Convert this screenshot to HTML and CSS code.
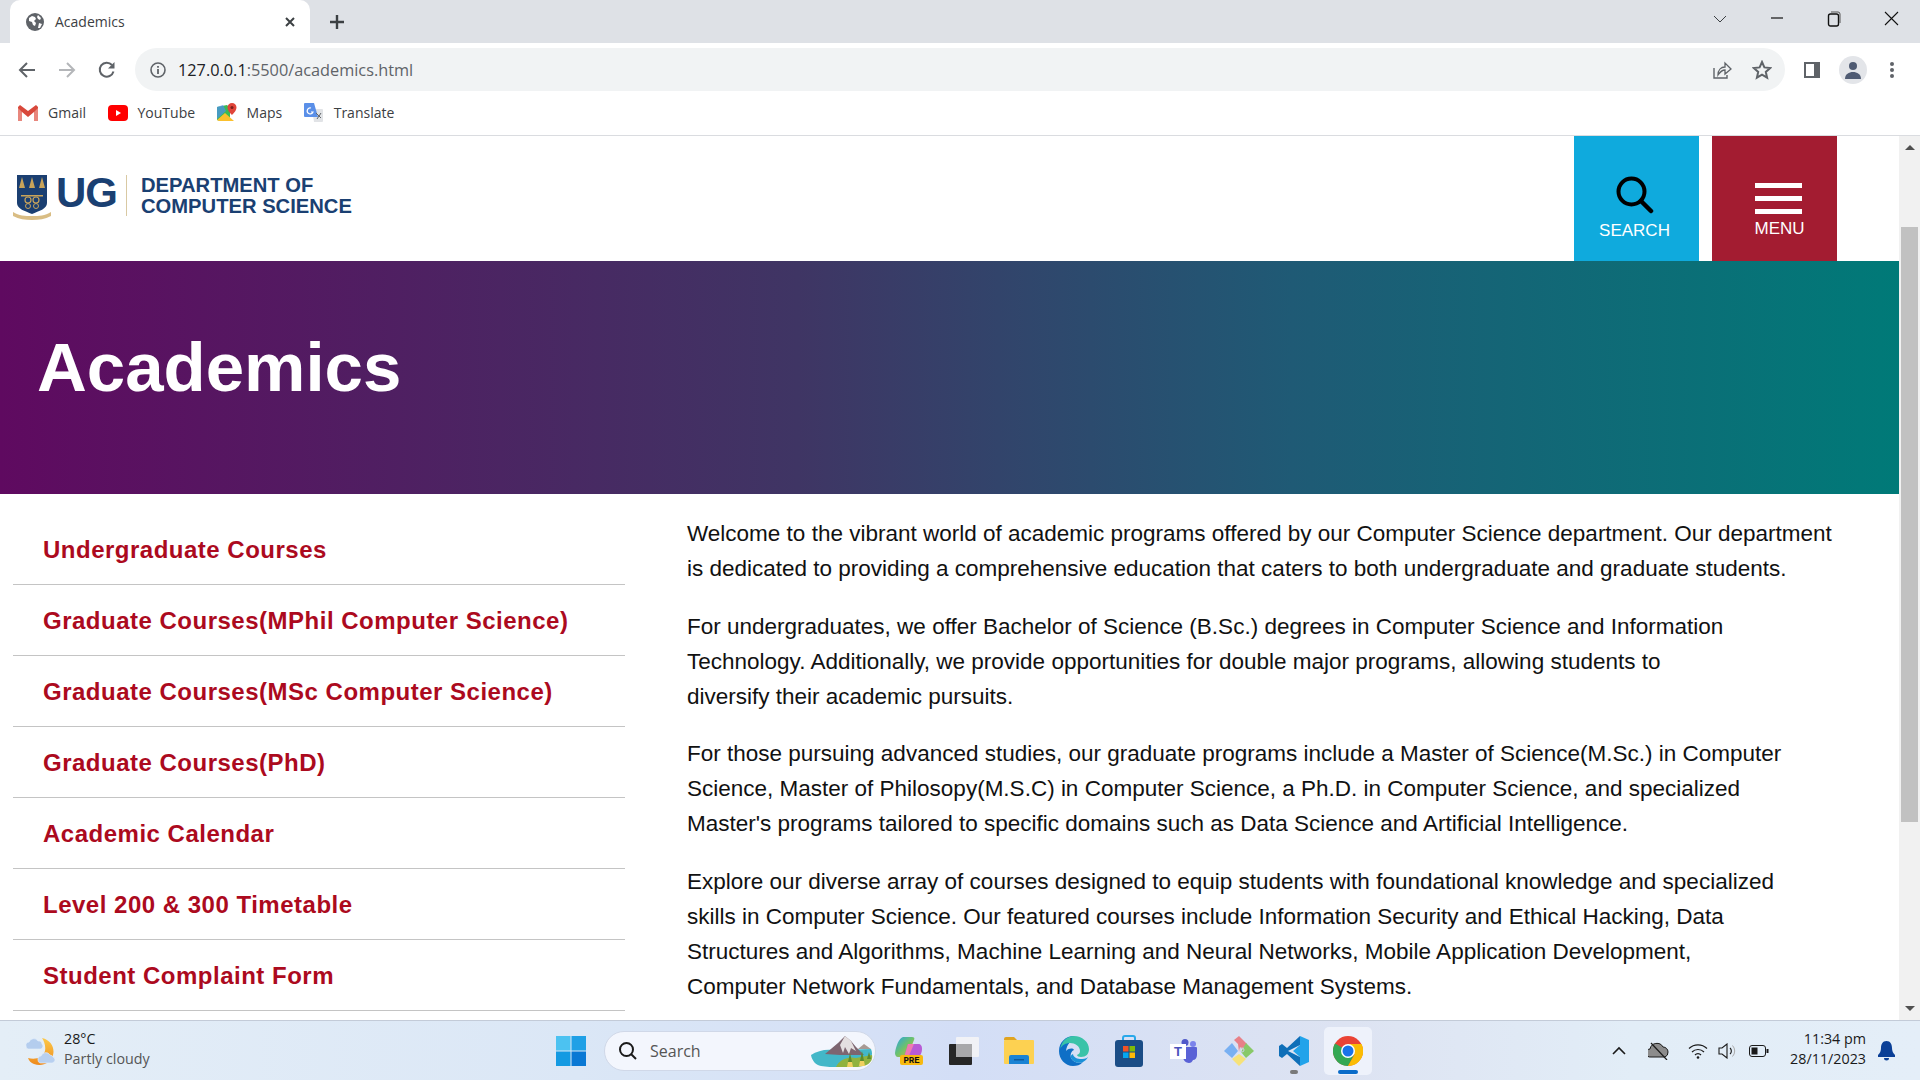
FILE: index.html
```html
<!DOCTYPE html>
<html lang="en">
<head>
  <meta charset="UTF-8" />
  <title>Academics</title>
  <link rel="stylesheet" href="styles.css">
</head>
<body>
<div class="screen">

  <!-- browser chrome -->
  <div class="tabstrip">
    <div class="tab">
      <svg class="tab-globe" width="18" height="18" viewBox="0 0 18 18"><circle cx="9" cy="9" r="9" fill="#5f6368"/><path d="M3 5l3-2 3 1 1 2-2 2 2 2-1 3-2-1-1-3-3-1zM12 2l3 3-1 2-2-1-1-2zM13 10l3 1-2 4-2 0z" fill="#fff"/></svg>
      <span class="tab-title">Academics</span>
      <svg class="tab-close" width="12" height="12" viewBox="0 0 12 12"><path d="M2 2l8 8M10 2l-8 8" stroke="#3c4043" stroke-width="2"/></svg>
    </div>
    <svg class="newtab" width="16" height="16" viewBox="0 0 16 16"><path d="M8 1v14M1 8h14" stroke="#3c4043" stroke-width="2.4"/></svg>
    <div class="win-controls">
      <svg class="win-chevron" width="14" height="10" viewBox="0 0 14 10"><path d="M1 2l6 6 6-6" fill="none" stroke="#3c4043"/></svg>
      <svg width="14" height="14" viewBox="0 0 14 14"><path d="M1 7h12" stroke="#111" stroke-width="1.2"/></svg>
      <svg width="14" height="16" viewBox="0 0 14 16"><rect x="1.5" y="3" width="10" height="12" rx="2" fill="none" stroke="#111" stroke-width="1.4"/><path d="M4 1h7a2 2 0 0 1 2 2v9" fill="none" stroke="#555"/></svg>
      <svg width="15" height="15" viewBox="0 0 15 15"><path d="M1 1l13 13M14 1L1 14" stroke="#111" stroke-width="1.1"/></svg>
    </div>
  </div>

  <div class="toolbar">
    <div class="nav-btns">
      <svg width="18" height="18" viewBox="0 0 18 18"><path d="M17 9H3M9 2L2 9l7 7" fill="none" stroke="#5f6368" stroke-width="2"/></svg>
      <svg width="18" height="18" viewBox="0 0 18 18"><path d="M1 9h14M9 2l7 7-7 7" fill="none" stroke="#b4b6b9" stroke-width="2"/></svg>
      <svg width="18" height="18" viewBox="0 0 18 18"><path d="M15.5 10.5A7 7 0 1 1 14 4" fill="none" stroke="#5f6368" stroke-width="2"/><path d="M16.5 1v6.5H10z" fill="#5f6368"/></svg>
    </div>
    <div class="omnibox">
      <svg width="16" height="16" viewBox="0 0 16 16"><circle cx="8" cy="8" r="7" fill="none" stroke="#5f6368" stroke-width="1.6"/><path d="M8 7v5M8 4v1.8" stroke="#5f6368" stroke-width="1.8"/></svg>
      <span class="url"><b>127.0.0.1</b>:5500/academics.html</span>
      <svg class="omni-share" width="20" height="20" viewBox="0 0 20 20"><path d="M2 8v10h13v-3" fill="none" stroke="#5f6368" stroke-width="1.4"/><path d="M6 15c0-5 3-8 7-8V3l6 6-6 5v-4c-3 0-5 2-7 5z" fill="none" stroke="#5f6368" stroke-width="1.3"/></svg>
      <svg class="omni-star" width="20" height="20" viewBox="0 0 20 20"><path d="M10 2l2.4 5.4 5.8.6-4.4 3.9 1.3 5.8L10 14.7l-5.1 3 1.3-5.8L1.8 8l5.8-.6z" fill="none" stroke="#5f6368" stroke-width="2"/></svg>
    </div>
    <div class="tool-btns">
      <svg width="18" height="18" viewBox="0 0 18 18"><rect x="1" y="1" width="16" height="16" fill="#5f6368"/><rect x="3" y="3" width="8" height="12" fill="#fff"/></svg>
      <span class="profile"><svg width="18" height="18" viewBox="0 0 18 18"><circle cx="9" cy="5" r="4" fill="#4f5b73"/><path d="M1 18c0-5 4-7 8-7s8 2 8 7z" fill="#4f5b73"/></svg></span>
      <svg class="dots" width="6" height="18" viewBox="0 0 6 18"><circle cx="3" cy="3" r="2" fill="#5f6368"/><circle cx="3" cy="9" r="2" fill="#5f6368"/><circle cx="3" cy="15" r="2" fill="#5f6368"/></svg>
    </div>
  </div>

  <div class="bookmarks">
    <a class="bm">
      <svg width="20" height="16" viewBox="0 0 20 16"><path d="M0 2v14h4V7l6 5 6-5v9h4V2l-2-2-8 6-8-6z" fill="#d8483b"/><path d="M0 16h4V7L0 3zM16 16h4V3l-4 4z" fill="#e8877d"/></svg>
      Gmail
    </a>
    <a class="bm">
      <svg width="20" height="16" viewBox="0 0 20 16"><rect width="20" height="16" rx="4" fill="#f00"/><path d="M8 5l5 3-5 3z" fill="#fff"/></svg>
      YouTube
    </a>
    <a class="bm">
      <svg width="20" height="20" viewBox="0 0 20 20"><path d="M0 4l10-2 3 3v13H3L0 17z" fill="#3cba54"/><path d="M0 17l8-7 9 8H2z" fill="#fbc02d"/><path d="M0 4l6-2 3 6-9 8z" fill="#4d8ef0" opacity=".7"/><path d="M15 0a4.5 4.5 0 0 1 4.5 4.5C19.5 8 15 12 15 12s-4.5-4-4.5-7.5A4.5 4.5 0 0 1 15 0z" fill="#e0453a"/><circle cx="15" cy="4.5" r="1.5" fill="#7b1f1a"/></svg>
      Maps
    </a>
    <a class="bm">
      <svg width="20" height="20" viewBox="0 0 20 20"><path d="M8 6h10a1 1 0 0 1 1 1v11a1 1 0 0 1-1 1H10z" fill="#e1e3e6"/><path d="M1 0h9l4 14H1a1 1 0 0 1-1-1V1a1 1 0 0 1 1-1z" fill="#5a8fe8"/><path d="M7 5a3 3 0 1 0 2 4H7" fill="none" stroke="#fff" stroke-width="1.2"/><path d="M12 10l5 5M17 10l-4 6" stroke="#5f6368" stroke-width="1"/></svg>
      Translate
    </a>
  </div>

  <!-- page -->
  <div class="viewport">
    <div class="page">
      <header class="site-header">
        <a class="logo">
          <svg class="crest" width="38" height="45" viewBox="0 0 38 45">
            <path d="M4 0h30v28c0 6-8 8-15 11C12 36 4 34 4 28z" fill="#1b3f71"/>
            <path d="M9 2l3 11H6zM19 2l3 11h-6zM29 2l3 11h-6z" fill="#c9a45a"/>
            <rect x="8" y="20" width="22" height="1.5" fill="#c9a45a"/>
            <circle cx="15" cy="25" r="3" fill="none" stroke="#c9a45a" stroke-width="1.2"/>
            <circle cx="23" cy="25" r="3" fill="none" stroke="#c9a45a" stroke-width="1.2"/>
            <circle cx="15" cy="31" r="2.5" fill="none" stroke="#c9a45a"/>
            <circle cx="23" cy="31" r="2.5" fill="none" stroke="#c9a45a"/>
            <path d="M0 37c6 4 12 4 19 4s13 0 19-4v4c-6 3-12 4-19 4S6 44 0 41z" fill="#d9bd84"/>
          </svg>
          <span class="logo-ug">UG</span>
          <span class="logo-sep"></span>
          <span class="logo-dept">DEPARTMENT OF<br>COMPUTER SCIENCE</span>
        </a>
        <div class="header-btns">
          <button class="hbtn hbtn-search">
            <svg width="38" height="38" viewBox="0 0 38 38"><circle cx="15.5" cy="15.5" r="13" fill="none" stroke="#000" stroke-width="4"/><path d="M25 25l10 10" stroke="#000" stroke-width="4.5" stroke-linecap="round"/></svg>
            <span>SEARCH</span>
          </button>
          <button class="hbtn hbtn-menu">
            <span class="burger"><i></i><i></i><i></i></span>
            <span>MENU</span>
          </button>
        </div>
      </header>

      <section class="hero">
        <h1>Academics</h1>
      </section>

      <div class="content">
        <ul class="side-nav">
          <li><a>Undergraduate Courses</a></li>
          <li><a>Graduate Courses(MPhil Computer Science)</a></li>
          <li><a>Graduate Courses(MSc Computer Science)</a></li>
          <li><a>Graduate Courses(PhD)</a></li>
          <li><a>Academic Calendar</a></li>
          <li><a>Level 200 &amp; 300 Timetable</a></li>
          <li><a>Student Complaint Form</a></li>
        </ul>
        <div class="intro">
          <p>Welcome to the vibrant world of academic programs offered by our Computer Science department. Our department<br>is dedicated to providing a comprehensive education that caters to both undergraduate and graduate students.</p>
          <p>For undergraduates, we offer Bachelor of Science (B.Sc.) degrees in Computer Science and Information<br>Technology. Additionally, we provide opportunities for double major programs, allowing students to<br>diversify their academic pursuits.</p>
          <p>For those pursuing advanced studies, our graduate programs include a Master of Science(M.Sc.) in Computer<br>Science, Master of Philosopy(M.S.C) in Computer Science, a Ph.D. in Computer Science, and specialized<br>Master's programs tailored to specific domains such as Data Science and Artificial Intelligence.</p>
          <p>Explore our diverse array of courses designed to equip students with foundational knowledge and specialized<br>skills in Computer Science. Our featured courses include Information Security and Ethical Hacking, Data<br>Structures and Algorithms, Machine Learning and Neural Networks, Mobile Application Development,<br>Computer Network Fundamentals, and Database Management Systems.</p>
        </div>
      </div>
    </div>

    <div class="scrollbar">
      <span class="sb-up"></span>
      <span class="sb-thumb"></span>
      <span class="sb-down"></span>
    </div>
  </div>

  <!-- windows taskbar -->
  <footer class="taskbar">
    <div class="weather">
      <svg width="30" height="30" viewBox="0 0 30 30">
        <defs><linearGradient id="moon" x1="0" y1="0" x2="0" y2="1"><stop offset="0" stop-color="#fcc94a"/><stop offset="1" stop-color="#ee8a1c"/></linearGradient></defs>
        <path d="M17 2c9 2 13 10 11 17-2 8-11 12-19 9-3-1-5-3-6-6 7 2 15 0 17-7 1-5-1-10-3-13z" fill="url(#moon)"/>
        <path d="M1 10a3.5 3.5 0 0 1 3-4 5 5 0 0 1 9-1 3.5 3.5 0 0 1 4 3 3 3 0 0 1-1 5H3a3 3 0 0 1-2-3z" fill="#b4cdee" stroke="#e6f0fb" stroke-width=".6"/>
        <path d="M13 24a3.5 3.5 0 0 1 3-4 5 5 0 0 1 9-1 3.5 3.5 0 0 1 3 2 3 3 0 0 1 1 5 3 3 0 0 1-2 1H15a3 3 0 0 1-2-3z" fill="#b8d0f0" stroke="#e6f0fb" stroke-width=".6"/>
      </svg>
      <div class="weather-text">
        <span class="temp">28°C</span>
        <span class="cond">Partly cloudy</span>
      </div>
    </div>

    <div class="task-center">
      <svg class="start" width="30" height="30" viewBox="0 0 30 30"><rect width="14.5" height="14.5" fill="#4cc2f1"/><rect x="15.5" width="14.5" height="14.5" fill="#1fa0e6"/><rect y="15.5" width="14.5" height="14.5" fill="#149ae2"/><rect x="15.5" y="15.5" width="14.5" height="14.5" fill="#0a78d4"/></svg>
      <div class="task-search">
        <svg width="20" height="20" viewBox="0 0 20 20"><circle cx="8.5" cy="8.5" r="6.5" fill="none" stroke="#1a1a1a" stroke-width="2"/><path d="M13 13l5 5" stroke="#1a1a1a" stroke-width="2"/></svg>
        <span>Search</span>
        <svg class="search-art" width="64" height="32" viewBox="0 0 64 32">
          <path d="M1 20c6-4 14-6 22-5l38-1c3 6-1 14-8 16-10 3-30 3-42 1C6 30 2 26 1 20z" fill="#43b7c8"/>
          <path d="M48 14l6-5 7 5z" fill="#a89a94"/>
          <path d="M15 19L28 8l7-7 6 5 5 6 8 8H30z" fill="#7d6570"/>
          <path d="M35 1l-5 9 3 8 2-6 4 7 2-6 5 3-5-10z" fill="#e4dfe0"/>
          <path d="M26 32c3-7 12-11 20-9l16-3c1 5-2 10-9 11-8 2-18 2-27 1z" fill="#8fb23e"/>
          <path d="M38 27l2-9 2 9zM50 26l2-10 2 10zM57 24l2-7 2 7z" fill="#5c8a2c"/>
          <path d="M37 32l1-5h4l1 5zM49 31l1-5h4l1 5z" fill="#f0d060"/>
        </svg>
      </div>
      <span class="task-icon">
        <svg width="30" height="30" viewBox="0 0 30 30">
          <defs><linearGradient id="cop" x1="0" y1="0" x2="1" y2="1"><stop offset="0" stop-color="#27a3e8"/><stop offset=".5" stop-color="#6ec26a"/><stop offset="1" stop-color="#f1b13a"/></linearGradient></defs>
          <path d="M9 1h9c2 0 3 1 2 3l-6 15c-1 2-2 2-4 2H4c-2 0-3-2-3-4C2 10 5 2 9 1z" fill="url(#cop)"/>
          <path d="M14 8h10c3 0 4 2 4 5 0 4-2 9-7 9H10z" fill="#b85bd6"/>
          <path d="M14 8h6l-6 14h-4z" fill="#ef7ab0"/>
          <rect x="6" y="19" width="23" height="10" rx="2" fill="#f7b90f"/>
          <text x="17.5" y="27" class="pre-tag">PRE</text>
        </svg>
      </span>
      <span class="task-icon">
        <svg width="30" height="28" viewBox="0 0 30 28"><rect x="0" y="7" width="23" height="21" rx="1" fill="#262626"/><rect x="7" y="0" width="23" height="20" rx="1" fill="#f1f2f6"/><rect x="7" y="7" width="16" height="13" fill="#a8a8aa"/></svg>
      </span>
      <span class="task-icon">
        <svg width="30" height="27" viewBox="0 0 30 27"><path d="M0 2a2 2 0 0 1 2-2h8l3 3h-13z" fill="#e0a420"/><rect y="3" width="30" height="24" rx="1" fill="#fdd151"/><path d="M5 27v-7a2 2 0 0 1 2-2h16a2 2 0 0 1 2 2v7z" fill="#1a83d4"/><rect x="10" y="22" width="10" height="1.5" fill="#0e5a9c"/></svg>
      </span>
      <span class="task-icon">
        <svg width="30" height="30" viewBox="0 0 30 30">
          <path d="M15 0C7 0 0 6 0 15c0 8 6 15 14 15 4 0 7-1 10-4-5 2-10 0-12-4-1-3 0-7 3-8-1-2-5-2-8 1C8 8 12 4 16 4z" fill="#0f6fc6"/>
          <path d="M15 0c8 0 15 6 15 13 0 5-3 8-8 8-2 0-4-1-4-2 2-1 3-2 3-4 0-5-5-8-10-8-4 0-8 2-10 6C3 5 8 0 15 0z" fill="#39c3a8"/>
          <path d="M12 22c2 4 7 6 12 4 2-1 4-3 5-5-2 2-5 2-8 2-4 0-7-3-7-5-2 1-3 2-2 4z" fill="#1a91d8"/>
        </svg>
      </span>
      <span class="task-icon">
        <svg width="28" height="32" viewBox="0 0 28 32"><path d="M8 6V3a2 2 0 0 1 2-2h8a2 2 0 0 1 2 2v3" fill="none" stroke="#28a8ea" stroke-width="2"/><rect y="5" width="28" height="27" rx="3" fill="#1b4d86"/><rect x="8" y="11" width="5.5" height="5.5" fill="#f35325"/><rect x="14.5" y="11" width="5.5" height="5.5" fill="#81bc06"/><rect x="8" y="17.5" width="5.5" height="5.5" fill="#05a6f0"/><rect x="14.5" y="17.5" width="5.5" height="5.5" fill="#ffba08"/></svg>
      </span>
      <span class="task-icon">
        <svg width="27" height="24" viewBox="0 0 27 24"><circle cx="23" cy="5" r="3" fill="#7b83eb"/><circle cx="15" cy="3.5" r="3.5" fill="#5059c9"/><path d="M13 8h13a1 1 0 0 1 1 1v7c0 3-2 5-4 5-1 2-2 3-4 3-3 0-6-3-6-6z" fill="#5a62d6"/><rect y="5" width="16" height="15" fill="#fff"/><text x="8" y="17" class="teams-tag">T</text></svg>
      </span>
      <span class="task-icon">
        <svg width="30" height="30" viewBox="0 0 30 30"><path d="M15 0l8 8-5 5-2-2-1 5-1-8-3-3-1-1z" fill="#e88088"/><path d="M8 7l6 8-6 7-8-7z" fill="#79b0f2"/><path d="M22 7l8 8-8 7-5-6z" fill="#88c968"/><path d="M15 18l7 5-7 7-7-7z" fill="#f6e27a"/><circle cx="18" cy="14" r="2" fill="none" stroke="#cdd3e3"/></svg>
      </span>
      <span class="task-icon has-dot">
        <svg width="30" height="30" viewBox="0 0 30 30"><path d="M21 0l9 4v22l-9 4V21l-7-6 7-6z" fill="#22a3ea"/><path d="M21 0L8 12 3 8 0 10v10l3 2 5-4 13 12v-9l-12-6 12-6z" fill="#0f6fb8"/></svg>
      </span>
      <span class="task-icon task-active">
        <svg width="30" height="30" viewBox="0 0 30 30"><circle cx="15" cy="15" r="15" fill="#ea4335"/><path d="M15 15L2 7.5A15 15 0 0 0 15 30l7-13z" fill="#34a853"/><path d="M15 8h13.5A15 15 0 0 1 15 30l6.5-11.5z" fill="#fbbc04"/><circle cx="15" cy="15" r="7" fill="#fff"/><circle cx="15" cy="15" r="5.5" fill="#1a73e8"/></svg>
      </span>
    </div>

    <div class="tray">
      <svg width="14" height="9" viewBox="0 0 14 9"><path d="M1 8l6-6 6 6" fill="none" stroke="#1a1a1a" stroke-width="1.6"/></svg>
      <svg class="tray-cloud" width="22" height="18" viewBox="0 0 22 18"><path d="M3 15a4 4 0 0 1-1-8 7 7 0 0 1 13-2 5 5 0 0 1 5 5 5 5 0 0 1-3 5z" fill="#8c8c8c" stroke="#1a1a1a"/><path d="M3 1l16 17" stroke="#1a1a1a" stroke-width="1.2"/></svg>
      <svg class="tray-wifi" width="20" height="16" viewBox="0 0 20 16"><path d="M1 5.5a13 13 0 0 1 18 0M4 9a8.500 8.500 0 0 1 12 0M7 12a4 4 0 0 1 6 0" fill="none" stroke="#1a1a1a" stroke-width="1.2"/><circle cx="10" cy="14.5" r="1.3" fill="#1a1a1a"/></svg>
      <svg class="tray-vol" width="20" height="16" viewBox="0 0 20 16"><path d="M1 5h3l5-4v14l-5-4H1z" fill="none" stroke="#1a1a1a" stroke-width="1.1"/><path d="M12 5a4 4 0 0 1 0 6" fill="none" stroke="#1a1a1a" stroke-width="1.1"/><path d="M14.5 2.5a8 8 0 0 1 0 11" fill="none" stroke="#aaa"/></svg>
      <svg class="tray-batt" width="20" height="12" viewBox="0 0 20 12"><rect x=".5" y=".5" width="16" height="11" rx="2.5" fill="none" stroke="#1a1a1a"/><rect x="2.5" y="2.5" width="6" height="7" fill="#1a1a1a"/><rect x="17.5" y="4" width="2" height="4" fill="#1a1a1a"/></svg>
      <div class="clock"><span>11:34 pm</span><span>28/11/2023</span></div>
      <svg class="tray-bell" width="17" height="20" viewBox="0 0 17 20"><path d="M8.5 0c4 0 5.5 3.5 5.5 7 0 3 1 5 3 7v2H0v-2c2-2 3-4 3-7 0-3.500 1.500-7 5.500-7z" fill="#0a3f97"/><path d="M6 17h5a2.5 2.5 0 0 1-5 0z" fill="#0a3f97"/></svg>
    </div>
  </footer>
</div>
</body>
</html>
```

FILE: styles.css
```css
* { margin: 0; padding: 0; box-sizing: border-box; }
html, body { height: 100%; overflow: hidden; }
body { font-family: 'Liberation Sans', Arial, sans-serif; color: #111; background: #fff; }
svg { display: block; flex: none; }

.screen {
  width: 1920px;
  height: 1080px;
  display: flex;
  flex-direction: column;
  overflow: hidden;
}

/* chrome */
.tabstrip {
  height: 43px;
  background: #dee1e6;
  display: flex;
  align-items: flex-end;
  padding-left: 10px;
  flex: none;
}
.tab {
  width: 300px;
  height: 43px;
  background: #fff;
  border-radius: 10px 10px 0 0;
  display: flex;
  align-items: center;
  padding: 0 14px 0 16px;
  font-family: 'Open Sans', sans-serif;
}
.tab-title { font-size: 14px; color: #3c4043; margin-left: 11px; }
.tab-close { margin-left: auto; }
.newtab { margin: 0 0 13px 19px; }
.win-controls {
  margin-left: auto;
  height: 100%;
  display: flex;
  align-items: flex-start;
  gap: 43px;
  padding: 11px 21px 0 0;
}
.win-chevron { margin-top: 3px; }

.toolbar {
  height: 53px;
  background: #fff;
  display: flex;
  align-items: flex-start;
  flex: none;
  padding-top: 5px;
}
.nav-btns {
  width: 135px;
  height: 43px;
  display: flex;
  align-items: center;
  gap: 22px;
  padding-left: 18px;
}
.omnibox {
  width: 1650px;
  height: 43px;
  background: #f1f3f4;
  border-radius: 22px;
  display: flex;
  align-items: center;
  padding-left: 15px;
}
.url {
  font-family: 'Open Sans', sans-serif;
  font-size: 16.3px;
  color: #5f6368;
  margin-left: 12px;
}
.url b { font-weight: 400; color: #202124; }
.omni-share { margin-left: auto; }
.omni-star { margin: 0 13px 0 20px; }
.tool-btns {
  flex: 1;
  height: 43px;
  display: flex;
  align-items: center;
  gap: 18px;
  padding-left: 18px;
}
.profile {
  width: 28px;
  height: 28px;
  border-radius: 50%;
  background: #e3e5e9;
  display: flex;
  align-items: center;
  justify-content: center;
}
.dots { margin-left: 4px; }

.bookmarks {
  height: 40px;
  flex: none;
  background: #fff;
  border-bottom: 1px solid #dadce0;
  display: flex;
  align-items: center;
  gap: 21.5px;
  padding: 0 0 6px 18px;
}
.bm {
  display: flex;
  align-items: center;
  gap: 10px;
  font-family: 'Open Sans', sans-serif;
  font-size: 14px;
  color: #3c4043;
}

/* page */
.viewport { flex: 1; display: flex; min-height: 0; }
.page { flex: 1; min-width: 0; overflow: hidden; }

.site-header {
  height: 125px;
  display: flex;
  align-items: flex-start;
  justify-content: space-between;
  padding-right: 62px;
}
.logo {
  display: flex;
  align-items: center;
  margin: 39px 0 0 13px;
}
.logo-ug {
  font-size: 42px;
  font-weight: 700;
  letter-spacing: -1px;
  color: #1a4072;
  margin: -10px 0 0 5px;
  line-height: 40px;
}
.logo-sep { width: 1px; height: 41px; background: #d9c9a3; margin: -5px 14px 0 9px; }
.logo-dept {
  font-size: 20.2px;
  font-weight: 700;
  line-height: 21px;
  color: #1a4072;
  margin-top: -4px;
}
.header-btns { display: flex; gap: 13px; }
.hbtn {
  width: 125px;
  height: 125px;
  border: none;
  color: #fff;
  font: 17px 'Liberation Sans', Arial, sans-serif;
  display: flex;
  flex-direction: column;
  align-items: center;
}
.hbtn-search { background: #0faadd; padding: 40px 4px 0 0; gap: 7px; }
.hbtn-menu { background: #a31c31; padding: 47px 0 0 8px; gap: 5px; }
.hbtn-menu span:last-child { margin-left: 2px; }
.burger {
  width: 47px;
  display: flex;
  flex-direction: column;
  gap: 8px;
}
.burger i { display: block; height: 5px; background: #fff; }

.hero {
  height: 233px;
  background: linear-gradient(90deg, #5f0a60 0%, #3f3564 42%, #1f5a75 68%, #007a78 100%);
  display: flex;
  align-items: center;
  padding: 0 0 20px 37px;
}
.hero h1 { font-size: 69px; font-weight: 700; color: #fff; }

.content { display: flex; padding-left: 13px; }
.side-nav {
  list-style: none;
  width: 612px;
  flex: none;
  padding-top: 20px;
}
.side-nav li { height: 71px; border-bottom: 1px solid #c4c4c4; display: flex; align-items: center; padding: 1px 0 0 30px; }
.side-nav a { font-size: 24px; font-weight: 700; color: #ac0a1e; letter-spacing: .5px; }
.intro { padding: 22px 0 0 62px; font-size: 22.5px; line-height: 35px; color: #111; white-space: nowrap; }
.intro p { margin-bottom: 22.5px; }

.scrollbar {
  width: 21px;
  flex: none;
  background: #f1f1f1;
  position: relative;
}
.sb-up, .sb-down {
  position: absolute;
  left: 6px;
  width: 0;
  height: 0;
  border-left: 5px solid transparent;
  border-right: 5px solid transparent;
}
.sb-up { top: 9px; border-bottom: 5px solid #505050; }
.sb-down { bottom: 9px; border-top: 5px solid #505050; }
.sb-thumb {
  position: absolute;
  top: 91px;
  left: 2px;
  width: 17px;
  height: 595px;
  background: #c1c1c1;
}

/* taskbar */
.taskbar {
  height: 60px;
  flex: none;
  border-top: 1px solid #c3cbd8;
  background: linear-gradient(90deg, #e4eef7 0%, #dbe7f6 30%, #d3def6 50%, #dde3f2 70%, #e2edf7 85%, #e4eef8 100%);
  display: flex;
  align-items: center;
  position: relative;
  font-family: 'Open Sans', sans-serif;
}
.weather { display: flex; align-items: center; gap: 9px; padding-left: 25px; width: 556px; flex: none; }
.weather-text { display: flex; flex-direction: column; font-size: 14.3px; line-height: 20.5px; padding-bottom: 3px; }
.temp { color: #1a1a1a; }
.cond { color: #555; }
.task-center { display: flex; align-items: center; }
.start { margin-right: 18px; }
.task-search {
  width: 272px;
  height: 40px;
  border-radius: 20px;
  background: #f3f6fd;
  border: 1px solid #d0d8e8;
  display: flex;
  align-items: center;
  padding-left: 13px;
  gap: 12px;
  font-size: 16px;
  color: #555;
  margin-right: 5px;
  position: relative;
}
.search-art { position: absolute; right: 1px; top: 3px; }
.task-icon {
  width: 55px;
  height: 48px;
  display: flex;
  align-items: center;
  justify-content: center;
  position: relative;
}
.pre-tag { font: 700 9px 'Liberation Mono', monospace; fill: #111; text-anchor: middle; }
.teams-tag { font: 700 13px 'Liberation Sans', sans-serif; fill: #4b53bc; text-anchor: middle; }
.has-dot::after {
  content: "";
  position: absolute;
  bottom: 1px;
  left: 24px;
  width: 8px;
  height: 4px;
  border-radius: 2px;
  background: #7a7a7a;
}
.task-active { background: #eef2fb; border-radius: 5px; width: 48px; margin-left: 3px; }
.task-active::after {
  content: "";
  position: absolute;
  bottom: 1px;
  left: 14px;
  width: 20px;
  height: 4px;
  border-radius: 2px;
  background: #0a6cc9;
}
.tray { margin-left: auto; display: flex; align-items: center; padding-right: 25px; }
.tray-cloud { margin-left: 22px; }
.tray-wifi { margin-left: 18px; }
.tray-vol { margin-left: 10px; }
.tray-batt { margin-left: 11px; }
.clock {
  display: flex;
  flex-direction: column;
  align-items: flex-end;
  font-size: 14.3px;
  line-height: 20.5px;
  color: #1a1a1a;
  margin-left: 21px;
  padding-bottom: 3px;
}
.tray-bell { margin-left: 12px; }
```
